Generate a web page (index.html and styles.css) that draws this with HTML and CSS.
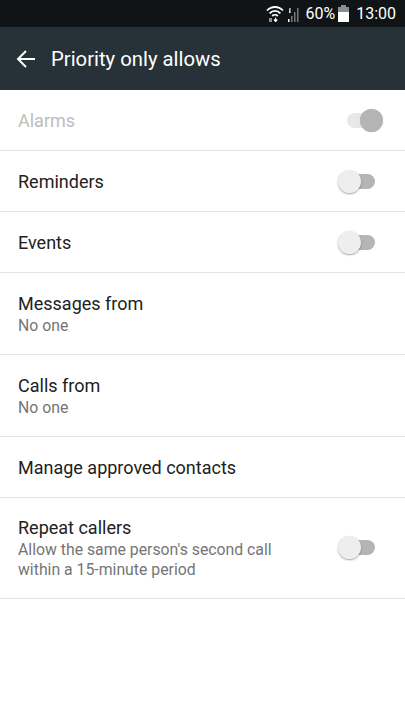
FILE: index.html
```html
<!DOCTYPE html>
<html>
<head>
    <link rel="stylesheet" href="styles.css">
</head>
<body>
    <div class="status-bar">
        <svg class="wifi" width="18" height="20" viewBox="0 0 18 20">
            <path d="M1 6.500C5.500 1.800 12.500 1.800 17 6.500" fill="none" stroke="#fff" stroke-width="1.800"/>
            <path d="M3.600 9.300C6.800 6 11.200 6 14.400 9.300" fill="none" stroke="#fff" stroke-width="1.800"/>
            <path d="M6.200 12C7.800 10.400 10.200 10.400 11.800 12" fill="none" stroke="#fff" stroke-width="1.800"/>
            <rect x="3" y="14" width="3" height="4" fill="#8a8e90"/>
            <path d="M9.600 13.500v3M8 15.800l1.600 2.200 1.600-2.200z" fill="#fff" stroke="#fff" stroke-width="1"/>
        </svg>
        <svg class="signal" width="14" height="20" viewBox="0 0 14 20">
            <path d="M2.500 4h1v5h-1.500z" fill="#fff"/>
            <rect x="1" y="15" width="1.500" height="3" fill="#fff"/>
            <rect x="4" y="12" width="1.500" height="6" fill="#777"/>
            <rect x="7" y="8" width="1.500" height="10" fill="#777"/>
            <rect x="10" y="4" width="1.500" height="14" fill="#777"/>
        </svg>
        <span class="battery-text">60%</span>
        <svg class="battery" width="13" height="17" viewBox="0 0 13 17">
            <rect x="4" y="0" width="5" height="2" fill="#8a8e90"/>
            <rect x="1" y="2" width="11" height="5" fill="#8a8e90"/>
            <rect x="1" y="7" width="11" height="10" fill="#fff"/>
        </svg>
        <span class="clock">13:00</span>
    </div>

    <div class="app-bar">
        <svg class="back" width="20" height="20" viewBox="0 0 20 20">
            <path d="M19 10H2M10 2l-8 8 8 8" fill="none" stroke="#fff" stroke-width="2"/>
        </svg>
        <div class="title">Priority only allows</div>
    </div>

    <div class="row disabled">
        <div class="row-text"><div class="label">Alarms</div></div>
        <div class="toggle on"><div class="track"></div><div class="thumb"></div></div>
    </div>
    <div class="row">
        <div class="row-text"><div class="label">Reminders</div></div>
        <div class="toggle"><div class="track"></div><div class="thumb"></div></div>
    </div>
    <div class="row">
        <div class="row-text"><div class="label">Events</div></div>
        <div class="toggle"><div class="track"></div><div class="thumb"></div></div>
    </div>
    <div class="row tall">
        <div class="row-text">
            <div class="label">Messages from</div>
            <div class="sub">No one</div>
        </div>
    </div>
    <div class="row tall">
        <div class="row-text">
            <div class="label">Calls from</div>
            <div class="sub">No one</div>
        </div>
    </div>
    <div class="row">
        <div class="row-text"><div class="label">Manage approved contacts</div></div>
    </div>
    <div class="row repeat">
        <div class="row-text">
            <div class="label">Repeat callers</div>
            <div class="sub">Allow the same person's second call<br>within a 15-minute period</div>
        </div>
        <div class="toggle"><div class="track"></div><div class="thumb"></div></div>
    </div>
</body>
</html>
```

FILE: styles.css
```css
body {
    margin: 0;
    padding: 0;
    background: #fff;
    font-family: Roboto, "Liberation Sans", sans-serif;
    overflow: hidden;
}

.status-bar {
    height: 27px;
    background: #101416;
    color: #fff;
    display: flex;
    align-items: center;
    justify-content: flex-end;
    padding-right: 9px;
    font-size: 16px;
    box-sizing: border-box;
}

.wifi {
    margin-right: 3px;
}

.signal {
    margin-right: 4px;
}

.battery {
    margin: 0 6px 0 2px;
}

.app-bar {
    height: 63px;
    background: #263238;
    color: #fff;
    display: flex;
    align-items: center;
    padding-left: 16px;
}

.back {
    margin-right: 15px;
}

.title {
    font-size: 20.300px;
}

.row {
    min-height: 60px;
    border-bottom: 1px solid #e4e4e4;
    display: flex;
    align-items: center;
    justify-content: space-between;
    padding: 0 30px 0 18px;
}

.row.tall {
    min-height: 79px;
    padding-top: 2px;
}

.row.repeat {
    min-height: 100px;
}

.row.repeat .toggle {
    margin-bottom: 3px;
}

.label {
    font-size: 18px;
    color: #212121;
}

.sub {
    font-size: 15.800px;
    line-height: 20px;
    color: #757575;
    margin-top: 2px;
}

.disabled .label {
    color: #bdbdbd;
}

.toggle {
    position: relative;
    width: 37px;
    height: 24px;
}

.track {
    position: absolute;
    left: 6px;
    right: 0;
    top: 5px;
    height: 15px;
    border-radius: 8px;
    background: #b5b5b5;
}

.thumb {
    position: absolute;
    left: 0;
    top: 1px;
    width: 23px;
    height: 23px;
    border-radius: 50%;
    background: #eee;
    box-shadow: 0 1px 2px rgba(0, 0, 0, 0.35);
}

.toggle.on .track {
    background: #e8e8e8;
    left: 9px;
    right: 7px;
}

.toggle.on .thumb {
    left: 22px;
    background: #b4b4b4;
    box-shadow: 0 0 1px rgba(0, 0, 0, 0.2);
}
```
